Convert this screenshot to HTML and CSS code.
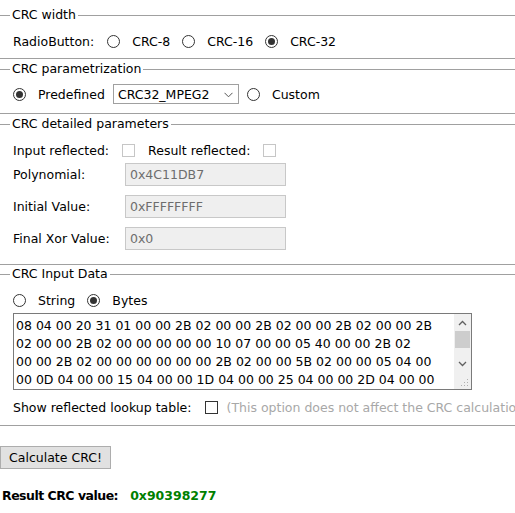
FILE: index.html
```html
<!DOCTYPE html>
<html>
<head>
<meta charset="utf-8">
<link rel="stylesheet" href="styles.css">
</head>
<body>
<div class="page">
  <fieldset class="group g1">
    <legend>CRC width</legend>
    <div class="row">
      <span class="lbl">RadioButton:</span>
      <label class="opt"><input type="radio" name="w"><span>CRC-8</span></label>
      <label class="opt"><input type="radio" name="w"><span>CRC-16</span></label>
      <label class="opt"><input type="radio" name="w" checked><span>CRC-32</span></label>
    </div>
  </fieldset>

  <fieldset class="group g2">
    <legend>CRC parametrization</legend>
    <div class="row">
      <label class="opt first"><input type="radio" name="p" checked><span>Predefined</span></label>
      <div class="select"><span>CRC32_MPEG2</span>
        <svg width="9" height="6" viewBox="0 0 9 6"><path d="M0.5 0.8 L4.5 4.8 L8.5 0.8" fill="none" stroke="#555" stroke-width="1"/></svg>
      </div>
      <label class="opt"><input type="radio" name="p"><span>Custom</span></label>
    </div>
  </fieldset>

  <fieldset class="group g3">
    <legend>CRC detailed parameters</legend>
    <div class="row checks">
      <span class="lbl">Input reflected:</span>
      <input type="checkbox" class="cb" disabled>
      <span class="lbl">Result reflected:</span>
      <input type="checkbox" class="cb" disabled>
    </div>
    <div class="param"><span class="plbl">Polynomial:</span><input class="field" type="text" value="0x4C11DB7" disabled></div>
    <div class="param"><span class="plbl">Initial Value:</span><input class="field" type="text" value="0xFFFFFFFF" disabled></div>
    <div class="param"><span class="plbl">Final Xor Value:</span><input class="field" type="text" value="0x0" disabled></div>
  </fieldset>

  <fieldset class="group g4">
    <legend>CRC Input Data</legend>
    <div class="row">
      <label class="opt first"><input type="radio" name="d"><span>String</span></label>
      <label class="opt"><input type="radio" name="d" checked><span>Bytes</span></label>
    </div>
    <div class="databox">
      <textarea class="data" wrap="off" spellcheck="false">08 04 00 20 31 01 00 00 2B 02 00 00 2B 02 00 00 2B 02 00 00 2B
02 00 00 2B 02 00 00 00 00 00 10 07 00 00 05 40 00 00 2B 02
00 00 2B 02 00 00 00 00 00 00 2B 02 00 00 5B 02 00 00 05 04 00
00 0D 04 00 00 15 04 00 00 1D 04 00 00 25 04 00 00 2D 04 00 00
35 04 00 00 3D 04 00 00 45 04 00 00 4D 04 00 00 55 04 00 00</textarea>
      <div class="sbar">
        <div class="sbtn"><svg width="9" height="6" viewBox="0 0 9 6"><path d="M1 5 L4.5 1.5 L8 5" fill="none" stroke="#606060" stroke-width="1.3"/></svg></div>
        <div class="strack"><div class="sthumb"></div></div>
        <div class="sbtn"><svg width="9" height="6" viewBox="0 0 9 6"><path d="M1 1 L4.5 4.5 L8 1" fill="none" stroke="#606060" stroke-width="1.3"/></svg></div>
        <div class="sgrip"><svg width="8" height="8" viewBox="0 0 8 8" fill="#b0b0b0"><rect x="6" y="0" width="1" height="1"/><rect x="3" y="3" width="1" height="1"/><rect x="6" y="3" width="1" height="1"/><rect x="0" y="6" width="1" height="1"/><rect x="3" y="6" width="1" height="1"/><rect x="6" y="6" width="1" height="1"/></svg></div>
      </div>
    </div>
    <div class="row lookup">
      <span class="lbl">Show reflected lookup table:</span>
      <input type="checkbox" class="cb on">
      <span class="note">(This option does not affect the CRC calculation</span>
    </div>
  </fieldset>

  <button class="calc" type="button">Calculate CRC!</button>

  <div class="result"><span class="rl">Result CRC value:</span><span class="rv">0x90398277</span></div>
</div>
</body>
</html>
```

FILE: styles.css
```css
html, body {
  margin: 0;
  padding: 0;
  overflow: hidden;
  background: #fff;
}
body {
  font-family: "DejaVu Sans", Verdana, sans-serif;
  font-size: 12.5px;
  color: #000;
}
.page {
  padding-top: 8px;
  width: 515px;
  overflow: hidden;
  white-space: nowrap;
}
.group {
  margin: 0 0 3px 0;
  padding: 0 0 0 13px;
  border: none;
  border-top: 1px solid #a0a0a0;
  border-bottom: 1px solid #a0a0a0;
  min-width: 0;
}
.group legend {
  padding: 0 2px;
  line-height: 14px;
  height: 14px;
  margin-left: -3px;
}
.row {
  display: flex;
  align-items: center;
  height: 20px;
}
.lbl { margin-right: 13px; }
.opt {
  display: flex;
  align-items: center;
  margin-right: 12px;
}
.opt input { margin: 0 12px 0 0; }

input[type=radio] {
  appearance: none;
  -webkit-appearance: none;
  width: 13px;
  height: 13px;
  border: 1px solid #333;
  border-radius: 50%;
  background: #fff;
  position: relative;
  flex: none;
}
input[type=radio]:checked::after {
  content: "";
  position: absolute;
  left: 2px;
  top: 2px;
  width: 7px;
  height: 7px;
  border-radius: 50%;
  background: #333;
}
.cb {
  appearance: none;
  -webkit-appearance: none;
  width: 13px;
  height: 13px;
  margin: 0 13px 0 0;
  border: 1px solid #c6c6c6;
  background: #fff;
  flex: none;
}
.cb.on { border-color: #333; margin-right: 9px; }

.g1 .row { margin-top: 9px; margin-bottom: 7px; }
.g2 .row { margin-top: 8px; margin-bottom: 9px; }
.g3 { margin-bottom: 2px; }

.select {
  display: flex;
  align-items: center;
  justify-content: space-between;
  box-sizing: border-box;
  width: 126px;
  height: 20px;
  border: 1px solid #a0a0a0;
  padding: 0 5px 0 4px;
  margin: 0 8px 0 -4px;
}
.select svg { margin-top: 1px; }

.g3 .checks { margin-top: 9px; margin-bottom: 3px; }
.param {
  display: flex;
  align-items: center;
  height: 23px;
  margin-bottom: 9px;
}
.param:last-child { margin-bottom: 14px; }
.plbl { width: 112px; }
.field {
  box-sizing: border-box;
  width: 161px;
  height: 23px;
  margin: 0;
  padding: 0 4px;
  border: 1px solid #c8c8c8;
  background: #efefef;
  color: #6d6d6d;
  font-family: inherit;
  font-size: 12.5px;
}

.g4 .row:first-of-type { margin-top: 9px; }
.databox {
  display: flex;
  box-sizing: border-box;
  width: 459px;
  height: 77px;
  border: 1px solid #7a7a7a;
  margin-top: 3px;
}
.data {
  flex: 1;
  border: none;
  outline: none;
  resize: none;
  overflow: hidden;
  margin: 0;
  padding: 3px 0 0 2px;
  font-family: inherit;
  font-size: 12.5px;
  line-height: 18px;
  color: #000;
  background: #fff;
}
.sbar {
  width: 17px;
  display: flex;
  flex-direction: column;
  background: #f0f0f0;
}
.sbtn {
  height: 17px;
  display: flex;
  align-items: center;
  justify-content: center;
}
.strack { height: 24px; }
.sthumb { height: 17px; margin: 0 1px; background: #cdcdcd; }
.sgrip {
  flex: 1;
  display: flex;
  align-items: flex-end;
  justify-content: flex-end;
  padding: 0 2px 2px 0;
}
.lookup { margin-top: 7px; margin-bottom: 8px; }
.note { color: #a8a8a8; }

.calc {
  display: block;
  margin: 20px 0 0 0;
  width: 111px;
  height: 23px;
  padding: 0;
  border: 1px solid #adadad;
  background: #e1e1e1;
  font-family: inherit;
  font-size: 12.5px;
  color: #000;
}
.result {
  margin: 19px 0 0 2px;
  font-weight: bold;
  line-height: 16px;
}
.rl { margin-right: 12px; letter-spacing: -0.5px; }
.rv { color: #008000; }
```
